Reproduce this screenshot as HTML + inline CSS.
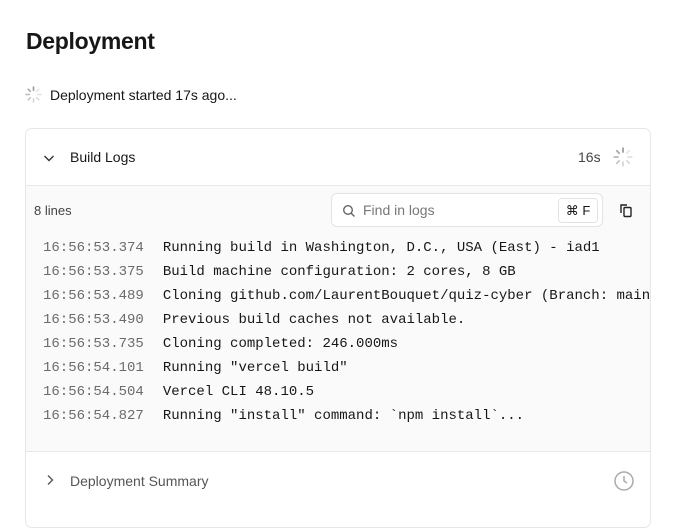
<!DOCTYPE html>
<html><head><style>
*{margin:0;padding:0;box-sizing:border-box}
body{width:674px;height:507px;overflow:hidden;background:#fff;font-family:"Liberation Sans",sans-serif;color:#171717;position:relative}
.abs{position:absolute}
h1{position:absolute;left:26px;top:28px;font-size:23px;font-weight:700;letter-spacing:-0.3px}
.card{position:absolute;left:25px;top:128px;width:626px;height:400px;border:1px solid #e6e6e6;border-radius:7px;overflow:hidden}
.hdr{height:57px;border-bottom:1px solid #e8e8e8;position:relative;background:#fff}
.logs{background:#fafafa;height:266px;position:relative;border-bottom:1px solid #e8e8e8}
.line{position:absolute;left:17px;font-family:"Liberation Mono",monospace;font-size:14px;white-space:nowrap}
.line span{color:#6b6b6b;margin-right:19px}
.search{position:absolute;left:305px;top:7px;width:272px;height:34px;border:1px solid #e3e3e3;border-radius:6px;background:#fff}
.kbd{position:absolute;right:4px;top:4px;height:25px;width:40px;border:1px solid #e3e3e3;border-radius:4px;font-size:13px;text-align:center;line-height:23px}
</style></head><body>
<h1>Deployment</h1>
<svg class="abs" style="left:25px;top:86px" width="17" height="17" viewBox="0 0 16 16" stroke-width="1.5" stroke-linecap="round">
<g stroke="#999"><line x1="8" y1="1" x2="8" y2="4"/><line x1="8" y1="12" x2="8" y2="15" opacity=".4"/><line x1="1" y1="8" x2="4" y2="8" opacity=".7"/><line x1="12" y1="8" x2="15" y2="8" opacity=".3"/><line x1="3" y1="3" x2="5" y2="5" opacity=".85"/><line x1="11" y1="11" x2="13" y2="13" opacity=".35"/><line x1="13" y1="3" x2="11" y2="5" opacity=".25"/><line x1="3" y1="13" x2="5" y2="11" opacity=".55"/></g></svg>
<div class="abs" style="left:50px;top:87px;font-size:14px">Deployment started 17s ago...</div>
<div class="card">
 <div class="hdr">
  <svg class="abs" style="left:17px;top:23px" width="12" height="12" viewBox="0 0 12 12"><path d="M1.5 4l4.5 4.5L10.5 4" fill="none" stroke="#333" stroke-width="1.4"/></svg>
  <div class="abs" style="left:44px;top:20px;font-size:14px">Build Logs</div>
  <div class="abs" style="left:552px;top:20px;font-size:14px;color:#444">16s</div>
  <svg class="abs" style="left:587px;top:18px" width="20" height="20" viewBox="0 0 16 16" stroke-width="1.4" stroke-linecap="round">
  <g stroke="#999"><line x1="8" y1="1" x2="8" y2="4"/><line x1="8" y1="12" x2="8" y2="15" opacity=".4"/><line x1="1" y1="8" x2="4" y2="8" opacity=".7"/><line x1="12" y1="8" x2="15" y2="8" opacity=".3"/><line x1="3" y1="3" x2="5" y2="5" opacity=".85"/><line x1="11" y1="11" x2="13" y2="13" opacity=".35"/><line x1="13" y1="3" x2="11" y2="5" opacity=".25"/><line x1="3" y1="13" x2="5" y2="11" opacity=".55"/></g></svg>
 </div>
 <div class="logs">
  <div class="abs" style="left:8px;top:17px;font-size:13px;color:#444">8 lines</div>
  <div class="search">
   <svg class="abs" style="left:10px;top:10px" width="14" height="14" viewBox="0 0 14 14"><circle cx="6" cy="6" r="4.3" fill="none" stroke="#666" stroke-width="1.4"/><path d="M9.2 9.2l3.3 3.3" stroke="#666" stroke-width="1.4"/></svg>
   <div class="abs" style="left:31px;top:8px;font-size:14px;color:#777">Find in logs</div>
   <div class="kbd">⌘ F</div>
  </div>
  <svg class="abs" style="left:592px;top:16px" width="16" height="16" viewBox="0 0 16 16" fill="none" stroke="#222" stroke-width="1.4"><path d="M3 11V3h6"/><rect x="6" y="5.5" width="7" height="9" rx="1"/></svg>
  <div class="line" style="top:54px"><span>16:56:53.374</span>Running build in Washington, D.C., USA (East) - iad1</div>
  <div class="line" style="top:78px"><span>16:56:53.375</span>Build machine configuration: 2 cores, 8 GB</div>
  <div class="line" style="top:102px"><span>16:56:53.489</span>Cloning github.com/LaurentBouquet/quiz-cyber (Branch: main</div>
  <div class="line" style="top:126px"><span>16:56:53.490</span>Previous build caches not available.</div>
  <div class="line" style="top:150px"><span>16:56:53.735</span>Cloning completed: 246.000ms</div>
  <div class="line" style="top:174px"><span>16:56:54.101</span>Running "vercel build"</div>
  <div class="line" style="top:198px"><span>16:56:54.504</span>Vercel CLI 48.10.5</div>
  <div class="line" style="top:222px"><span>16:56:54.827</span>Running "install" command: `npm install`...</div>
 </div>
 <svg class="abs" style="left:18px;top:345px" width="12" height="12" viewBox="0 0 12 12"><path d="M4 1.5l4.5 4.5L4 10.5" fill="none" stroke="#555" stroke-width="1.4"/></svg>
 <div class="abs" style="left:44px;top:344px;font-size:14px;color:#555">Deployment Summary</div>
 <svg class="abs" style="left:587px;top:341px" width="22" height="22" viewBox="0 0 22 22" fill="none" stroke="#aaa" stroke-width="1.5"><circle cx="11" cy="11" r="9"/><path d="M11 6v5l3 2"/></svg>
</div>
</body></html>
